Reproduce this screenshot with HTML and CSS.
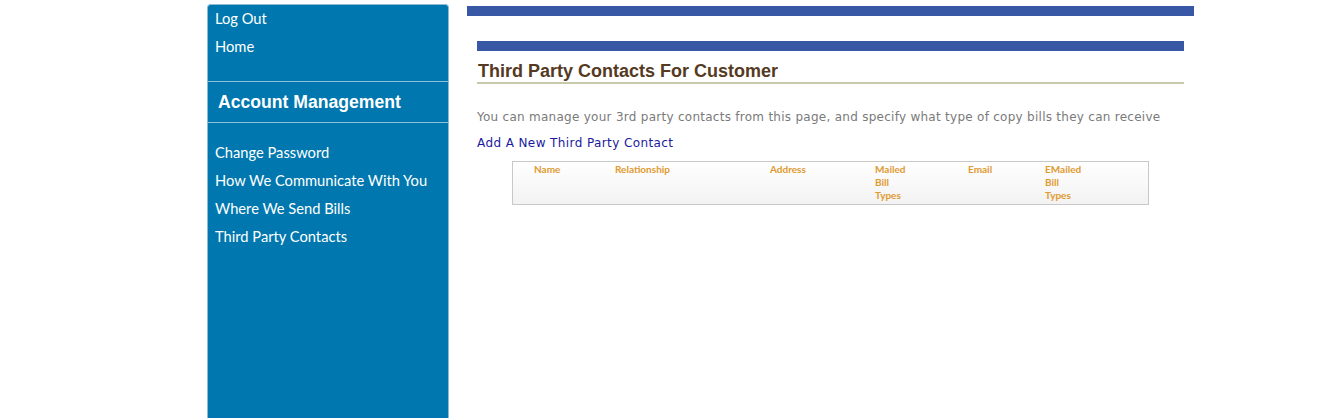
FILE: index.html
```html
<!DOCTYPE html>
<html>
<head>
<meta charset="utf-8">
<link rel="stylesheet" href="styles.css">
</head>
<body>
<div class="page">
  <nav class="sidebar">
    <ul class="menu top">
      <li><a href="#">Log Out</a></li>
      <li><a href="#">Home</a></li>
    </ul>
    <h2 class="section">Account Management</h2>
    <ul class="menu sub">
      <li><a href="#">Change Password</a></li>
      <li><a href="#">How We Communicate With You</a></li>
      <li><a href="#">Where We Send Bills</a></li>
      <li><a href="#">Third Party Contacts</a></li>
    </ul>
  </nav>
  <main class="content">
    <div class="bar outer"></div>
    <div class="inner">
      <div class="bar"></div>
      <h1 class="title">Third Party Contacts For Customer</h1>
      <p class="desc">You can manage your 3rd party contacts from this page, and specify what type of copy bills they can receive</p>
      <a class="add" href="#">Add A New Third Party Contact</a>
      <table class="grid">
        <thead>
          <tr>
            <th class="c-name">Name</th>
            <th class="c-rel">Relationship</th>
            <th class="c-addr">Address</th>
            <th class="c-mail">Mailed<br>Bill<br>Types</th>
            <th class="c-email">Email</th>
            <th class="c-emailed">EMailed<br>Bill<br>Types</th>
          </tr>
        </thead>
      </table>
    </div>
  </main>
</div>
</body>
</html>
```
FILE: styles.css
```css
html, body {
  margin: 0;
  padding: 0;
  background: #fff;
}
.page {
  display: flex;
  align-items: flex-start;
  padding-left: 207px;
  padding-top: 4px;
  height: 414px;
  overflow: hidden;
}
.sidebar {
  width: 240px;
  height: 430px;
  background: #0077ae;
  border: 1px solid #8fb9d3;
  border-bottom: none;
  border-radius: 4px 4px 0 0;
  flex-shrink: 0;
  font-family: Lato, "Open Sans", sans-serif;
}
.menu {
  list-style: none;
  margin: 0;
  padding: 0;
}
.menu li {
  height: 28px;
  line-height: 28px;
}
.menu a {
  color: #fff;
  text-decoration: none;
  font-size: 14.7px;
  padding-left: 7px;
}
.menu.top {
  padding-top: 0;
  height: 76px;
  border-bottom: 1px solid #8ec0dc;
}
.menu.top li { height: 25px; line-height: 25px; }
.menu.top li + li { height: 32px; line-height: 32px; }
.section {
  margin: 0;
  height: 40px;
  line-height: 40px;
  padding-left: 10px;
  font-family: "Liberation Sans", Arial, sans-serif;
  font-size: 17.6px;
  font-weight: bold;
  color: #fff;
  border-bottom: 1px solid #8ec0dc;
}
.menu.sub {
  padding-top: 15px;
}
.content {
  margin-left: 18px;
  width: 727px;
}
.bar {
  height: 10px;
  background: #3858a6;
}
.bar.outer {
  margin-top: 2px;
}
.inner {
  padding: 25px 10px 0 10px;
}
.title {
  margin: 0;
  padding: 10px 0 1px 1px;
  font-family: "Liberation Sans", Arial, sans-serif;
  font-size: 18px;
  font-weight: bold;
  color: #543a22;
  border-bottom: 2px solid #c8c8aa;
  line-height: 20px;
}
.desc {
  margin: 25px 0 0 0;
  font-family: "DejaVu Sans", Verdana, sans-serif;
  font-size: 12px;
  color: #7a7a7a;
  line-height: 16px;
  letter-spacing: 0.27px;
}
.add {
  display: inline-block;
  margin-top: 10px;
  font-family: "DejaVu Sans", Verdana, sans-serif;
  font-size: 12px;
  color: #1a1aa0;
  text-decoration: none;
  line-height: 16px;
  letter-spacing: 0.4px;
}
.grid {
  margin: 10px 0 0 35px;
  width: 637px;
  border: 1px solid #c8c8c8;
  border-collapse: collapse;
  background: linear-gradient(#ffffff, #f2f2f2);
}
.grid th {
  text-align: left;
  vertical-align: top;
  font-family: Lato, "Open Sans", sans-serif;
  font-size: 10px;
  font-weight: bold;
  color: #e09a30;
  line-height: 13px;
  padding: 1px 0 2px 0;
}
.c-name { width: 81px; padding-left: 21px !important; }
.c-rel { width: 155px; }
.c-addr { width: 105px; }
.c-mail { width: 93px; }
.c-email { width: 77px; }
```
